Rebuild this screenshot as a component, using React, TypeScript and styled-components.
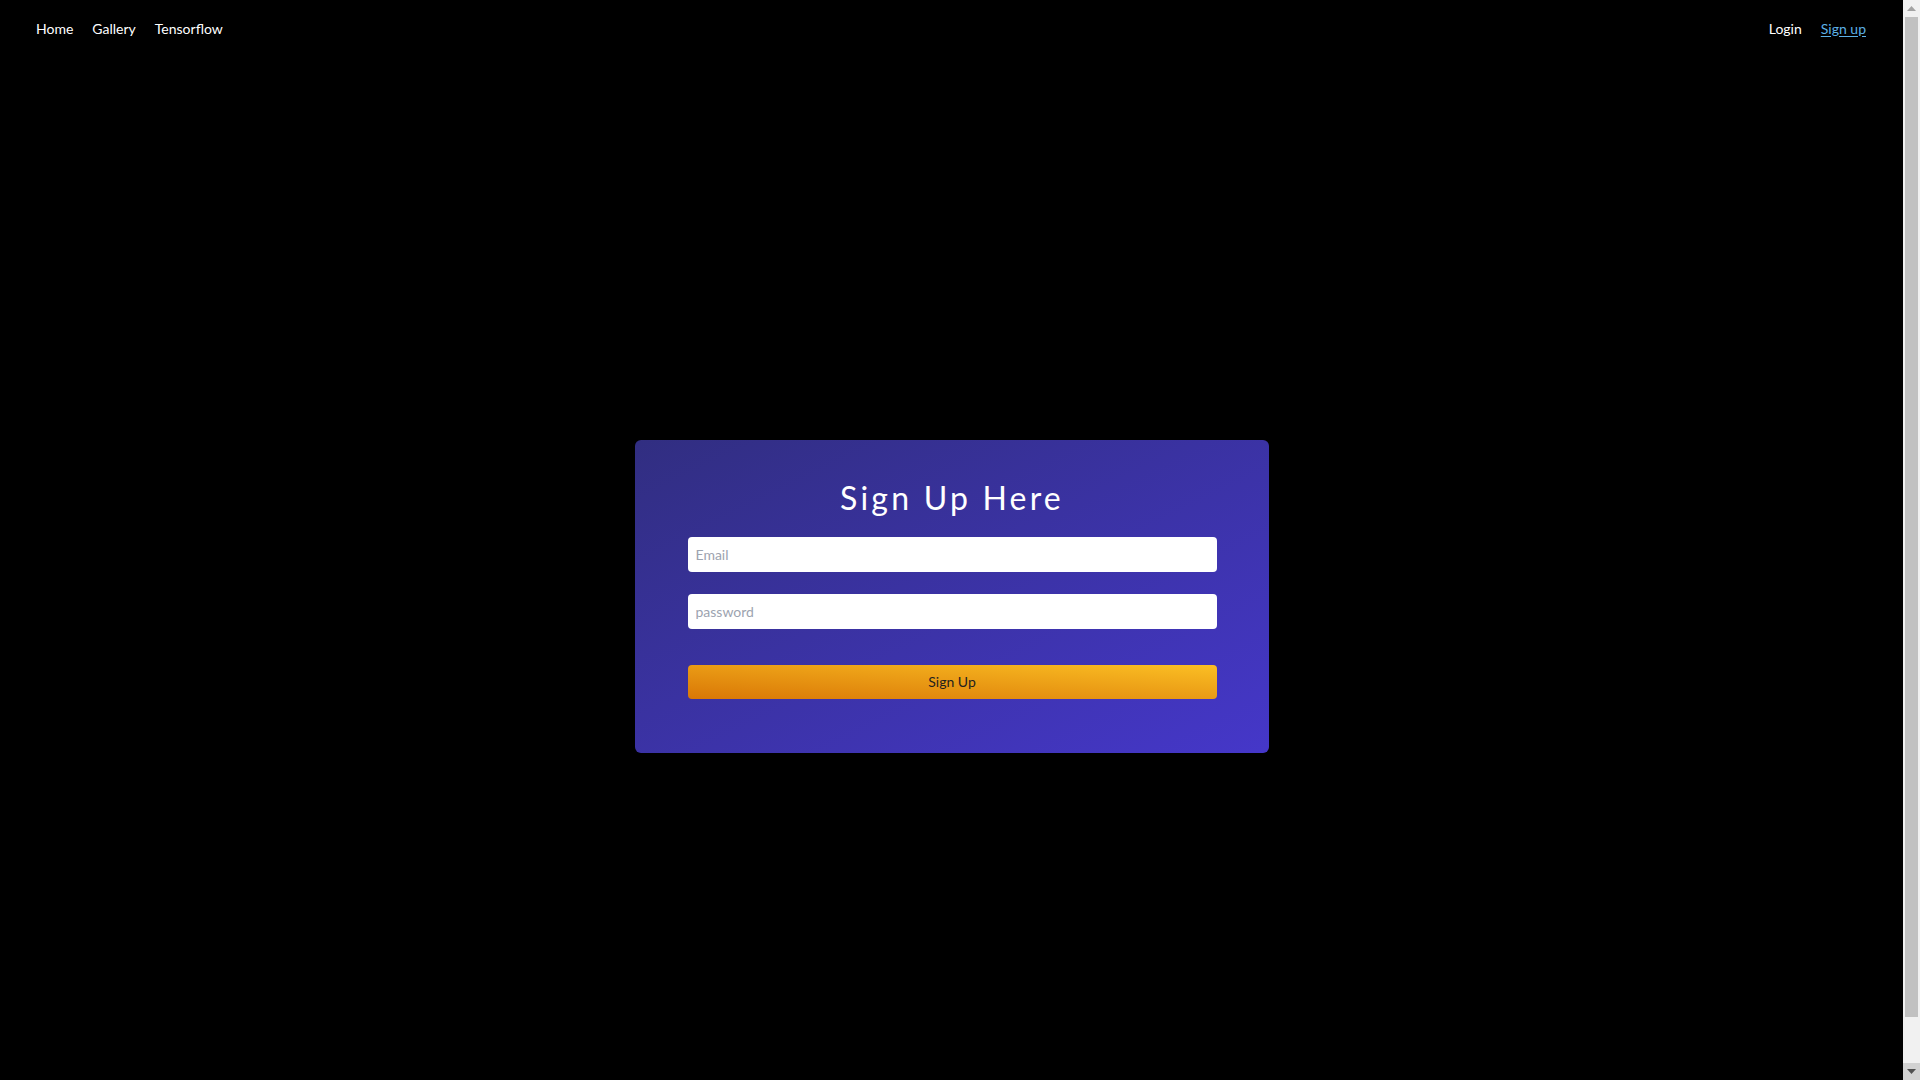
import React from "react";
import styled, { createGlobalStyle } from "styled-components";

const GlobalStyle = createGlobalStyle`
  html, body {
    margin: 0;
    padding: 0;
    background: #000;
  }
  body {
    font-family: "Segoe UI", Lato, "Noto Sans", sans-serif;
    color: #fff;
  }
  * {
    box-sizing: border-box;
  }
`;

// fake classic scrollbar, the page in the reference is a bit taller than the window
const FakeScrollbar = () => (
  <ScrollTrack>
    <ScrollButton>
      <svg width="9" height="5" viewBox="0 0 9 5">
        <path d="M4.5 0 L9 5 L0 5 Z" fill="#a3a3a3" />
      </svg>
    </ScrollButton>
    <ScrollThumb />
    <ScrollButton pressed>
      <svg width="9" height="5" viewBox="0 0 9 5">
        <path d="M0 0 L9 0 L4.5 5 Z" fill="#505050" />
      </svg>
    </ScrollButton>
  </ScrollTrack>
);

const App = () => {
  return (
    <>
      <GlobalStyle />
      <Page>
        <Navbar>
          <NavGroup>
            <NavLink href="#">Home</NavLink>
            <NavLink href="#">Gallery</NavLink>
            <NavLink href="#">Tensorflow</NavLink>
          </NavGroup>
          <NavGroup>
            <NavLink href="#">Login</NavLink>
            <NavLink href="#" active>
              Sign up
            </NavLink>
          </NavGroup>
        </Navbar>
        <Main>
          <Card>
            <Title>Sign Up Here</Title>
            <Form onSubmit={e => e.preventDefault()}>
              <Input type="email" placeholder="Email" />
              <Input type="password" placeholder="password" />
              <SubmitButton type="submit">Sign Up</SubmitButton>
            </Form>
          </Card>
        </Main>
      </Page>
      <FakeScrollbar />
    </>
  );
};

export default App;

const Page = styled.div`
  width: calc(100% - 17px);
`;

const Navbar = styled.nav`
  height: 56px;
  display: flex;
  align-items: center;
  justify-content: space-between;
  padding: 0 37px 0 36px;
`;

const NavGroup = styled.div`
  display: flex;
  align-items: center;
  gap: 19px;
`;

const NavLink = styled.a<{ active?: boolean }>`
  font-size: 14px;
  color: ${props => (props.active ? "#5cb0e6" : "#fff")};
  text-decoration: ${props => (props.active ? "underline" : "none")};
  text-underline-offset: 2px;
`;

const Main = styled.main`
  height: 100vh;
  display: flex;
  align-items: center;
  justify-content: center;
`;

const Card = styled.div`
  width: 634px;
  padding: 34px 52px 54px 53px;
  border-radius: 6px;
  background: linear-gradient(to bottom right, #312e81, #4537c9);
`;

const Title = styled.h1`
  margin: 0 0 15px;
  font-size: 32px;
  font-weight: 400;
  line-height: 48px;
  letter-spacing: 0.1em;
  text-align: center;
  color: #fff;
`;

const Form = styled.form`
  display: flex;
  flex-direction: column;
`;

const Input = styled.input`
  height: 35px;
  width: 100%;
  margin-bottom: 22px;
  padding: 0 8px;
  border: none;
  border-radius: 4px;
  background: #fff;
  font-family: inherit;
  font-size: 14px;
  color: #111;
  outline: none;
  &::placeholder {
    color: #9ca3af;
  }
  &:last-of-type {
    margin-bottom: 36px;
  }
`;

const SubmitButton = styled.button`
  height: 34px;
  width: 100%;
  border: none;
  border-radius: 4px;
  background: linear-gradient(to top right, #d97706, #fbbf24);
  font-family: inherit;
  font-size: 14px;
  color: #1f1f1f;
  cursor: pointer;
`;

const ScrollTrack = styled.div`
  position: fixed;
  top: 0;
  right: 0;
  width: 17px;
  height: 100vh;
  display: flex;
  flex-direction: column;
  background: #f1f1f1;
`;

const ScrollButton = styled.div<{ pressed?: boolean }>`
  height: 17px;
  flex: none;
  display: flex;
  align-items: center;
  justify-content: center;
  background: ${props => (props.pressed ? "#d2d2d2" : "#f1f1f1")};
`;

const ScrollThumb = styled.div`
  flex: 1;
  margin: 0 2px 46px 2px;
  background: #c1c1c1;
`;
